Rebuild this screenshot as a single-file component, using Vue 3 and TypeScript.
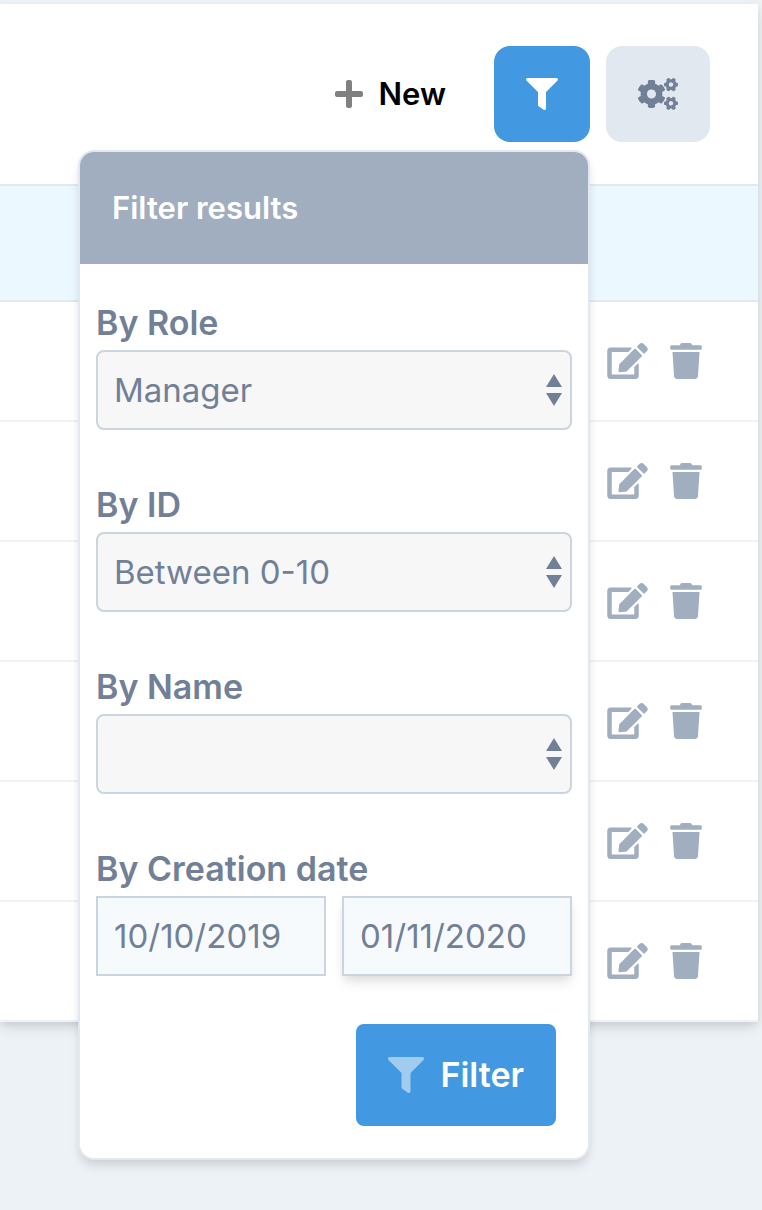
<script setup lang="ts">
import { ref } from 'vue'

interface SelectFilter {
  id: string
  label: string
  value: string
  options: string[]
}

const panelOpen = ref(true)

const filters = ref<SelectFilter[]>([
  { id: 'role', label: 'By Role', value: 'Manager', options: ['Manager'] },
  { id: 'range', label: 'By ID', value: 'Between 0-10', options: ['Between 0-10'] },
  { id: 'name', label: 'By Name', value: '', options: [''] },
])

const dateFrom = ref('10/10/2019')
const dateTo = ref('01/11/2020')

const rows = [1, 2, 3, 4, 5, 6]

const funnelPath =
  'M487.976 0H24.028C2.71 0-8.047 25.866 7.058 40.971L192 225.941V432c0 7.831 3.821 15.17 10.237 19.662l80 55.98C298.02 518.69 320 507.493 320 487.98V225.941l184.947-184.97C520.021 25.896 509.338 0 487.976 0z'
</script>

<template>
  <main class="page">
    <section class="card">
      <header class="toolbar">
        <button type="button" class="new-button">
          <svg class="plus" viewBox="0 0 448 512" aria-hidden="true">
            <path d="M416 208H272V64c0-17.67-14.33-32-32-32h-32c-17.67 0-32 14.33-32 32v144H32c-17.67 0-32 14.33-32 32v32c0 17.67 14.33 32 32 32h144v144c0 17.67 14.33 32 32 32h32c17.67 0 32-14.33 32-32V304h144c17.67 0 32-14.33 32-32v-32c0-17.67-14.33-32-32-32z" />
          </svg>
          New
        </button>

        <div class="filter-menu">
          <button type="button" class="square primary" aria-label="Filters" :aria-expanded="panelOpen" @click="panelOpen = !panelOpen">
            <svg class="tool-icon" viewBox="0 0 512 512" aria-hidden="true"><path :d="funnelPath" /></svg>
          </button>

          <form v-if="panelOpen" class="panel" @submit.prevent>
            <h2 class="panel-title">Filter results</h2>
            <div class="panel-body">
              <div v-for="filter in filters" :key="filter.id" class="field">
                <label class="label" :for="filter.id">{{ filter.label }}</label>
                <div class="select-wrap">
                  <select :id="filter.id" v-model="filter.value" class="control select">
                    <option v-for="option in filter.options" :key="option" :value="option">{{ option }}</option>
                  </select>
                  <svg class="arrows" viewBox="0 0 16 32" aria-hidden="true">
                    <path d="M8 0L16 13H0zM0 19H16L8 32z" />
                  </svg>
                </div>
              </div>

              <div class="field">
                <label class="label" for="date-from">By Creation date</label>
                <div class="dates">
                  <input id="date-from" v-model="dateFrom" class="control date" type="text" />
                  <input v-model="dateTo" class="control date raised" type="text" aria-label="By Creation date, end" />
                </div>
              </div>

              <button type="submit" class="submit">
                <svg class="submit-icon" viewBox="0 0 512 512" aria-hidden="true"><path :d="funnelPath" /></svg>
                Filter
              </button>
            </div>
          </form>
        </div>

        <button type="button" class="square muted" aria-label="Settings">
          <svg class="cogs" viewBox="0 0 640 512" aria-hidden="true">
            <path d="M512.1 191l-8.2 14.3c-3 5.3-9.4 7.5-15.1 5.4-11.8-4.4-22.6-10.7-32.1-18.6-4.6-3.8-5.8-10.5-2.8-15.7l8.2-14.3c-6.9-8-12.3-17.3-15.9-27.4h-16.5c-6 0-11.2-4.3-12.2-10.3-2-12-2.1-24.6 0-37.1 1-6 6.2-10.4 12.2-10.4h16.5c3.6-10.1 9-19.4 15.9-27.4l-8.2-14.3c-3-5.2-1.9-11.9 2.8-15.7 9.5-7.9 20.4-14.2 32.1-18.6 5.7-2.1 12.1.1 15.1 5.4l8.2 14.3c10.5-1.9 21.2-1.9 31.7 0L552 6.3c3-5.3 9.4-7.5 15.1-5.4 11.8 4.4 22.6 10.7 32.1 18.6 4.6 3.8 5.8 10.5 2.8 15.7l-8.2 14.3c6.9 8 12.3 17.3 15.9 27.4h16.5c6 0 11.2 4.3 12.2 10.3 2 12 2.1 24.6 0 37.1-1 6-6.2 10.4-12.2 10.4h-16.5c-3.6 10.1-9 19.4-15.9 27.4l8.2 14.3c3 5.2 1.9 11.9-2.8 15.7-9.5 7.9-20.4 14.2-32.1 18.6-5.7 2.1-12.1-.1-15.1-5.4l-8.2-14.3c-10.4 1.9-21.2 1.9-31.7 0zm-10.5-58.8c38.5 29.6 82.4-14.3 52.8-52.8-38.5-29.7-82.4 14.3-52.8 52.8zM386.3 286.1l33.7 16.8c10.1 5.8 14.5 18.1 10.5 29.1-8.9 24.2-26.4 46.4-42.6 65.8-7.4 8.9-20.2 11.1-30.3 5.3l-29.1-16.8c-16 13.7-34.6 24.6-54.9 31.7v33.6c0 11.6-8.3 21.6-19.7 23.6-24.6 4.2-50.4 4.4-75.9 0-11.5-2-20-11.9-20-23.6V418c-20.3-7.2-38.9-18-54.9-31.7L74 403c-10 5.8-22.9 3.6-30.3-5.3-16.2-19.4-33.3-41.6-42.2-65.7-4-10.9.4-23.2 10.5-29.1l33.3-16.8c-3.9-20.9-3.9-42.4 0-63.4L12 205.8c-10.1-5.8-14.6-18.1-10.5-29 8.9-24.2 26-46.4 42.2-65.8 7.4-8.9 20.2-11.1 30.3-5.3l29.1 16.8c16-13.7 34.6-24.6 54.9-31.7V57.1c0-11.5 8.2-21.5 19.6-23.5 24.6-4.2 50.5-4.4 76-.1 11.5 2 20 11.9 20 23.6v33.6c20.3 7.2 38.9 18 54.9 31.7l29.1-16.8c10-5.8 22.9-3.6 30.3 5.3 16.2 19.4 33.2 41.6 42.1 65.8 4 10.9.1 23.2-10 29.1l-33.7 16.8c3.9 21 3.9 42.5 0 63.5zm-117.6 21.1c59.2-77-28.7-164.9-105.7-105.7-59.2 77 28.7 164.9 105.7 105.7zm243.4 182.7l-8.2 14.3c-3 5.3-9.4 7.5-15.1 5.4-11.8-4.4-22.6-10.7-32.1-18.6-4.6-3.8-5.8-10.5-2.8-15.7l8.2-14.3c-6.9-8-12.3-17.3-15.9-27.4h-16.5c-6 0-11.2-4.3-12.2-10.3-2-12-2.1-24.6 0-37.1 1-6 6.2-10.4 12.2-10.4h16.5c3.6-10.1 9-19.4 15.9-27.4l-8.2-14.3c-3-5.2-1.9-11.9 2.8-15.7 9.5-7.9 20.4-14.2 32.1-18.6 5.7-2.1 12.1.1 15.1 5.4l8.2 14.3c10.5-1.9 21.2-1.9 31.7 0l8.2-14.3c3-5.3 9.4-7.5 15.1-5.4 11.8 4.4 22.6 10.7 32.1 18.6 4.6 3.8 5.8 10.5 2.8 15.7l-8.2 14.3c6.9 8 12.3 17.3 15.9 27.4h16.5c6 0 11.2 4.3 12.2 10.3 2 12 2.1 24.6 0 37.1-1 6-6.2 10.4-12.2 10.4h-16.5c-3.6 10.1-9 19.4-15.9 27.4l8.2 14.3c3 5.2 1.9 11.9-2.8 15.7-9.5 7.9-20.4 14.2-32.1 18.6-5.7 2.1-12.1-.1-15.1-5.4l-8.2-14.3c-10.4 1.9-21.2 1.9-31.7 0zM501.6 431c38.5 29.6 82.4-14.3 52.8-52.8-38.5-29.6-82.4 14.3-52.8 52.8z" />
          </svg>
        </button>
      </header>

      <table class="grid">
        <thead>
          <tr><th scope="col"></th></tr>
        </thead>
        <tbody>
          <tr v-for="row in rows" :key="row">
            <td>
              <div class="row-actions">
                <button type="button" class="row-button" aria-label="Edit">
                  <svg class="edit" viewBox="0 0 576 512" aria-hidden="true">
                    <path d="M402.6 83.2l90.2 90.2c3.8 3.8 3.8 10 0 13.8L274.4 405.6l-92.8 10.3c-12.4 1.4-22.9-9.1-21.5-21.5l10.3-92.8L388.8 83.2c3.8-3.8 10-3.8 13.8 0zm162-22.9l-48.8-48.8c-15.2-15.2-39.9-15.2-55.2 0l-35.4 35.4c-3.8 3.8-3.8 10 0 13.8l90.2 90.2c3.8 3.8 10 3.8 13.8 0l35.4-35.4c15.2-15.3 15.2-40 0-55.2zM384 346.2V448H64V128h229.8c3.2 0 6.2-1.3 8.5-3.5l40-40c7.6-7.6 2.2-20.5-8.5-20.5H48C21.5 64 0 85.5 0 112v352c0 26.5 21.5 48 48 48h352c26.5 0 48-21.5 48-48V306.2c0-10.7-12.9-16-20.5-8.5l-40 40c-2.2 2.3-3.5 5.3-3.5 8.5z" />
                  </svg>
                </button>
                <button type="button" class="row-button" aria-label="Delete">
                  <svg class="trash" viewBox="0 0 448 512" aria-hidden="true">
                    <path d="M432 32H312l-9.4-18.7A24 24 0 0 0 281.1 0H166.8a23.72 23.72 0 0 0-21.4 13.3L136 32H16A16 16 0 0 0 0 48v32a16 16 0 0 0 16 16h416a16 16 0 0 0 16-16V48a16 16 0 0 0-16-16zM53.2 467a48 48 0 0 0 47.9 45h245.8a48 48 0 0 0 47.9-45L416 128H32z" />
                  </svg>
                </button>
              </div>
            </td>
          </tr>
        </tbody>
      </table>
    </section>
  </main>
</template>

<style>
body {
  margin: 0;
  background: #edf2f7;
}
</style>

<style scoped>
.page,
.page * {
  box-sizing: border-box;
}

.page {
  min-height: 100vh;
  padding: 4px 4px 0 0;
  background: #edf2f7;
  font-family: Inter, 'Liberation Sans', sans-serif;
}

button,
input,
select {
  margin: 0;
  border: 0;
  font-family: inherit;
}

button {
  padding: 0;
  background: none;
  cursor: pointer;
}

svg {
  display: block;
  flex: none;
  fill: currentColor;
}

.card {
  background: #fff;
  box-shadow:
    0 8px 12px -2px rgba(0, 0, 0, 0.1),
    0 2px 8px rgba(0, 0, 0, 0.08);
}

.toolbar {
  display: flex;
  align-items: center;
  justify-content: flex-end;
  gap: 16px;
  padding: 42px 48px;
}

.new-button {
  display: flex;
  align-items: center;
  gap: 16px;
  padding: 24px 32px;
  color: #000;
  font-size: 31px;
  font-weight: 600;
  line-height: 48px;
}

.plus {
  width: 28px;
  height: 32px;
  color: #808080;
}

.square {
  display: flex;
  padding: 32px;
  border-radius: 16px;
}

.primary {
  background: #4299e1;
  color: #fff;
}

.muted {
  background: #e2e8f0;
  color: #718096;
}

.tool-icon {
  width: 32px;
  height: 32px;
}

.cogs {
  width: 40px;
  height: 32px;
}

.filter-menu {
  position: relative;
}

.panel {
  position: absolute;
  z-index: 1;
  top: calc(100% + 8px);
  right: 0;
  width: 512px;
  overflow: hidden;
  border: 2px solid #e2e8f0;
  border-radius: 16px;
  background: #fff;
  box-shadow:
    0 8px 12px -2px rgba(0, 0, 0, 0.1),
    0 4px 8px -2px rgba(0, 0, 0, 0.06);
}

.panel-title {
  margin: 0;
  padding: 32px;
  background: #a0aec0;
  color: #fff;
  font-size: 31px;
  font-weight: 600;
  line-height: 48px;
}

.panel-body {
  display: flex;
  flex-direction: column;
  gap: 48px;
  padding: 32px 16px;
}

.label {
  display: block;
  color: #718096;
  font-size: 34px;
  font-weight: 600;
  line-height: 54px;
}

.control {
  display: block;
  width: 100%;
  height: 80px;
  padding: 0 16px;
  border: 2px solid #cbd5e0;
  color: #718096;
  font-size: 33px;
}

.select-wrap {
  position: relative;
}

.select {
  appearance: none;
  border-radius: 8px;
  background: #f7f7f7;
}

.arrows {
  position: absolute;
  top: 24px;
  right: 10px;
  width: 16px;
  height: 32px;
  color: #718096;
  pointer-events: none;
}

.dates {
  display: grid;
  grid-template-columns: 1fr 1fr;
  gap: 16px;
}

.date {
  border-radius: 0;
  background: #f7fafc;
}

.raised {
  box-shadow:
    0 8px 12px -2px rgba(0, 0, 0, 0.1),
    0 4px 8px -2px rgba(0, 0, 0, 0.06);
}

.submit {
  display: flex;
  align-items: center;
  align-self: flex-end;
  gap: 16px;
  margin-right: 16px;
  padding: 24px 32px;
  border-radius: 8px;
  background: #4299e1;
  color: #fff;
  font-size: 34px;
  font-weight: 600;
  line-height: 54px;
}

.submit-icon {
  width: 36px;
  height: 36px;
  opacity: 0.5;
}

.grid {
  width: 100%;
  border-spacing: 0;
  border-collapse: separate;
}

th {
  height: 118px;
  padding: 0;
  border-top: 2px solid #e2e8f0;
  border-bottom: 2px solid #e2e8f0;
  background: #ebf8ff;
}

td {
  height: 120px;
  padding: 0 56px;
  border-bottom: 2px solid #edf2f7;
}

.row-actions {
  display: flex;
  justify-content: flex-end;
  gap: 22px;
}

.row-button {
  color: #a0aec0;
}

.edit {
  width: 41px;
  height: 36px;
}

.trash {
  width: 32px;
  height: 36px;
}
</style>
